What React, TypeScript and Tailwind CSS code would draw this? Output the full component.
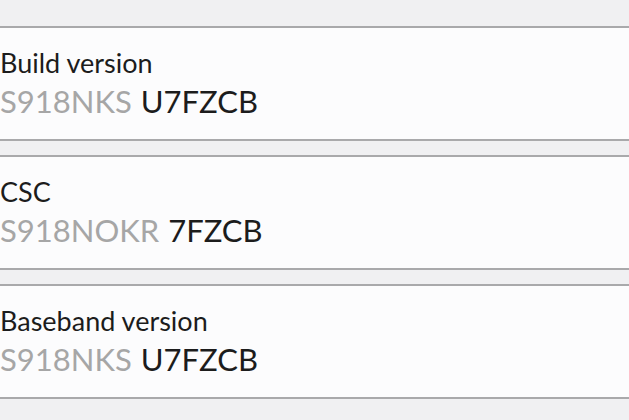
import React from 'react'

type Item = {
  label: string
  prefix: string
  suffix: string
}

const items: Item[] = [
  { label: 'Build version', prefix: 'S918NKS', suffix: 'U7FZCB' },
  { label: 'CSC', prefix: 'S918NOKR', suffix: '7FZCB' },
  { label: 'Baseband version', prefix: 'S918NKS', suffix: 'U7FZCB' },
]

const InfoCard: React.FC<{ item: Item }> = ({ item }) => (
  <div className="h-[115px] bg-[#fcfcfd] border-y-2 border-[#a9a9ab] pt-[20px]">
    <div className="text-[27px] leading-[30px] text-[#1c1c1c]">{item.label}</div>
    <div className="text-[31px] leading-[36px] flex gap-[9px] mt-[5px]">
      <span className="text-[#a6a6a6]">{item.prefix}</span>
      <span className="text-[#1c1c1c]">{item.suffix}</span>
    </div>
  </div>
)

export default function App() {
  return (
    <div
      className="w-[629px] h-[420px] bg-[#f0f0f2] pt-[26px] flex flex-col gap-[14px] overflow-hidden"
      style={{ fontFamily: '"Lato", "Noto Sans", sans-serif' }}
    >
      {items.map((item) => (
        <InfoCard key={item.label} item={item} />
      ))}
    </div>
  )
}
